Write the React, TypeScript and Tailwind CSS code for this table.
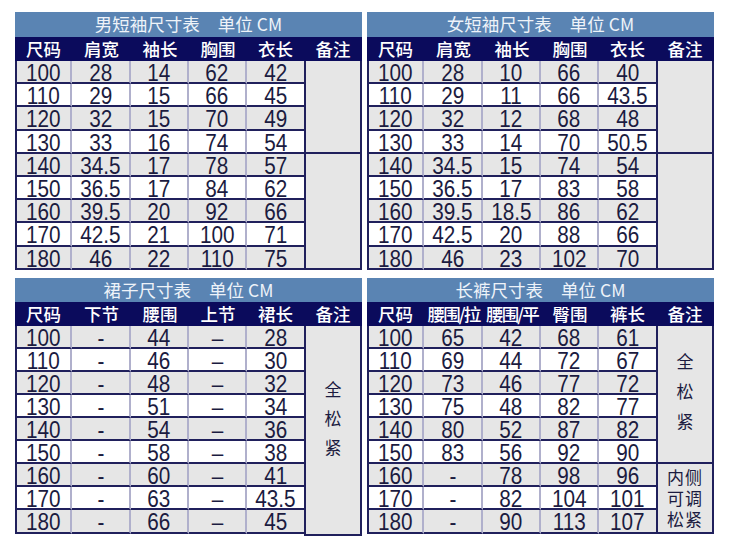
import React from "react";

type Remark = { cls: string; lines: string[]; inner: string };

type TableProps = {
  title: string;
  headers: string[];
  rows: string[][];
  remarks: Remark[];
  titleH: string;
  rowsCls: string;
};

const CJK = "[font-family:Noto_Sans_CJK_SC,sans-serif]";

function Table({ title, headers, rows, remarks, titleH, rowsCls }: TableProps) {
  return (
    <div className="w-[347px] flex flex-col">
      <div
        className={`${titleH} bg-[#5a84b3] flex items-center justify-center text-[17.5px] text-[#eef3f9] ${CJK}`}
      >
        <span>{title}</span>
        <span className="ml-[18px]">单位 CM</span>
      </div>
      <div className="h-[24px] bg-[#0b0b5c] grid grid-cols-[57px_59px_58px_58px_57px_58px] items-center">
        {headers.map((h, i) => (
          <div
            key={i}
            className={`text-center text-white text-[17.5px] leading-[24px] font-medium whitespace-nowrap ${CJK} ${
              h.length > 2 ? "tracking-[-1.8px]" : ""
            }`}
          >
            {h}
          </div>
        ))}
      </div>
      <div className={`grid grid-cols-[57px_59px_58px_58px_57px_58px] ${rowsCls}`}>
        {remarks.map((r, i) => (
          <div
            key={"r" + i}
            className={`${r.cls} bg-[#e6e6e6] border-l-2 border-r-2 border-b-2 border-[#20205c] flex flex-col items-center text-[17px] text-[#1b1b40] ${CJK} ${r.inner}`}
          >
            {r.lines.length > 0 && (
              <div className="text-center">
                {r.lines.map((l, k) => (
                  <React.Fragment key={k}>
                    {k > 0 && <br />}
                    {l}
                  </React.Fragment>
                ))}
              </div>
            )}
          </div>
        ))}
        {rows.map((row, ri) =>
          row.map((v, ci) => (
            <div
              key={ri + "-" + ci}
              className={`flex justify-center border-b-2 border-b-[#20205c] ${
                ri % 2 === 0 ? "bg-[#e6e6e6]" : "bg-white"
              } ${ci === 0 ? "border-l-2 border-l-[#20205c]" : ""} ${
                ci < 4 ? "border-r-2 border-r-[#b0b0cc]" : ""
              }`}
            >
              <span className="inline-block scale-x-[0.9] translate-y-[2px] text-[23px] leading-[20px] text-[#1b1b40] [font-family:Liberation_Sans,Arial,sans-serif] whitespace-nowrap">
                {v}
              </span>
            </div>
          ))
        )}
      </div>
    </div>
  );
}

const menRows = [
  ["100", "28", "14", "62", "42"],
  ["110", "29", "15", "66", "45"],
  ["120", "32", "15", "70", "49"],
  ["130", "33", "16", "74", "54"],
  ["140", "34.5", "17", "78", "57"],
  ["150", "36.5", "17", "84", "62"],
  ["160", "39.5", "20", "92", "66"],
  ["170", "42.5", "21", "100", "71"],
  ["180", "46", "22", "110", "75"],
];

const womenRows = [
  ["100", "28", "10", "66", "40"],
  ["110", "29", "11", "66", "43.5"],
  ["120", "32", "12", "68", "48"],
  ["130", "33", "14", "70", "50.5"],
  ["140", "34.5", "15", "74", "54"],
  ["150", "36.5", "17", "83", "58"],
  ["160", "39.5", "18.5", "86", "62"],
  ["170", "42.5", "20", "88", "66"],
  ["180", "46", "23", "102", "70"],
];

const skirtRows = [
  ["100", "-", "44", "–", "28"],
  ["110", "-", "46", "–", "30"],
  ["120", "-", "48", "–", "32"],
  ["130", "-", "51", "–", "34"],
  ["140", "-", "54", "–", "36"],
  ["150", "-", "58", "–", "38"],
  ["160", "-", "60", "–", "41"],
  ["170", "-", "63", "–", "43.5"],
  ["180", "-", "66", "–", "45"],
];

const pantsRows = [
  ["100", "65", "42", "68", "61"],
  ["110", "69", "44", "72", "67"],
  ["120", "73", "46", "77", "72"],
  ["130", "75", "48", "82", "77"],
  ["140", "80", "52", "87", "82"],
  ["150", "83", "56", "92", "90"],
  ["160", "-", "78", "98", "96"],
  ["170", "-", "82", "104", "101"],
  ["180", "-", "90", "113", "107"],
];

const shirtRemarks: Remark[] = [
  { cls: "col-start-6 row-start-1 row-span-4", lines: [], inner: "" },
  { cls: "col-start-6 row-start-5 row-span-5", lines: [], inner: "" },
];

export default function App() {
  return (
    <div className="w-[730px] h-[543px] bg-white pl-[15px] pt-[12px] flex flex-col gap-[8px]">
      <div className="flex gap-[5px]">
        <Table
          title="男短袖尺寸表"
          headers={["尺码", "肩宽", "袖长", "胸围", "衣长", "备注"]}
          rows={menRows}
          remarks={shirtRemarks}
          titleH="h-[25px]"
          rowsCls="grid-rows-[repeat(9,23.2px)]"
        />
        <Table
          title="女短袖尺寸表"
          headers={["尺码", "肩宽", "袖长", "胸围", "衣长", "备注"]}
          rows={womenRows}
          remarks={shirtRemarks}
          titleH="h-[25px]"
          rowsCls="grid-rows-[repeat(9,23.2px)]"
        />
      </div>
      <div className="flex gap-[5px]">
        <Table
          title="裙子尺寸表"
          headers={["尺码", "下节", "腰围", "上节", "裙长", "备注"]}
          rows={skirtRows}
          remarks={[
            {
              cls: "col-start-6 row-start-1 row-span-9 -mb-[2px]",
              lines: ["全", "松", "紧"],
              inner: "pt-[48px] leading-[29px]",
            },
          ]}
          titleH="h-[24px]"
          rowsCls="grid-rows-[repeat(9,23.1px)]"
        />
        <Table
          title="长裤尺寸表"
          headers={["尺码", "腰围/拉", "腰围/平", "臀围", "裤长", "备注"]}
          rows={pantsRows}
          remarks={[
            {
              cls: "col-start-6 row-start-1 row-span-6",
              lines: ["全", "松", "紧"],
              inner: "justify-center leading-[30px] pb-[6px]",
            },
            {
              cls: "col-start-6 row-start-7 row-span-3",
              lines: ["内侧", "可调", "松紧"],
              inner: "justify-center leading-[21px] tracking-[1px]",
            },
          ]}
          titleH="h-[24px]"
          rowsCls="grid-rows-[repeat(9,23.1px)]"
        />
      </div>
    </div>
  );
}
